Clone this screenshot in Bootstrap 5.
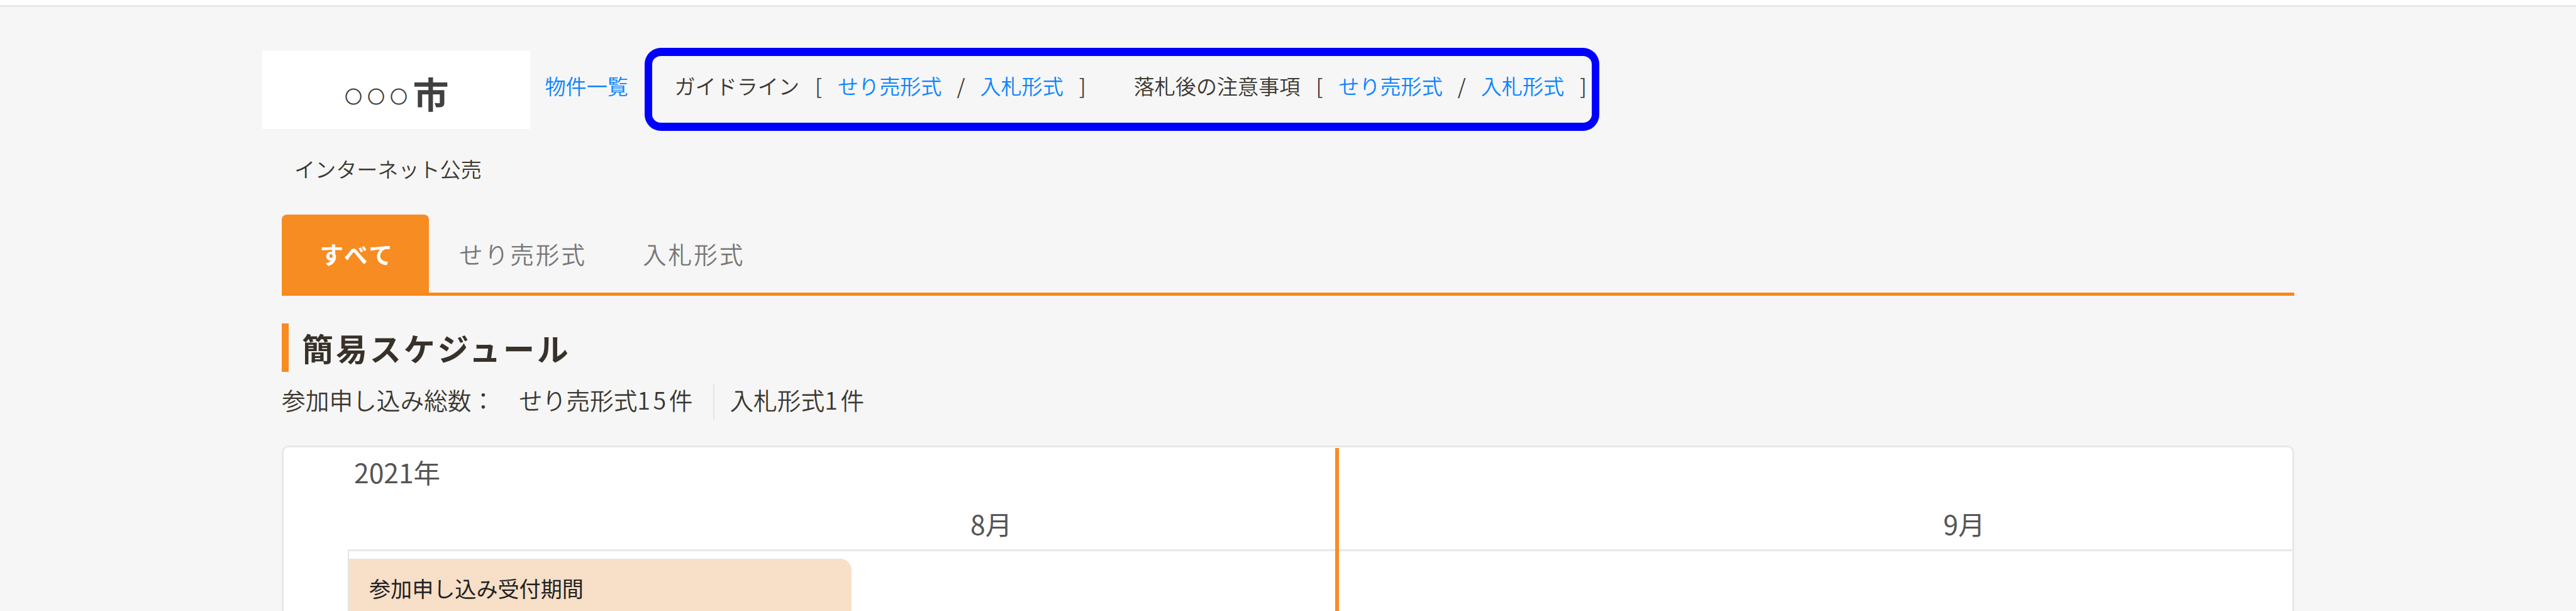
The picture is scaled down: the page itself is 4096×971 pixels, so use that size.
<!DOCTYPE html>
<html lang="ja">
  <head>
    <meta charset="UTF-8" />
    <meta name="viewport" content="width=device-width, initial-scale=1.0" />
    <title>インターネット公売</title>
    <link
      href="https://cdn.jsdelivr.net/npm/bootstrap@5.3.2/dist/css/bootstrap.min.css"
      rel="stylesheet"
    />
    <style>
      body {
        height: 971px;
        background: #f6f6f6;
        color: #3b372f;
        font-family: "Noto Sans CJK JP", sans-serif;
        font-size: 33.1px;
        font-weight: 350;
        line-height: 48px;
      }
      a {
        color: #0a84ff;
      }
      .top-strip {
        height: 11px;
        border-bottom: 3px solid #e8e8e8;
      }
      .site-header {
        height: 330px;
        padding: 65px 0 0 417px;
      }
      .logo-box {
        width: 426px;
        height: 124px;
        margin-top: 5px;
        padding: 9px 0 0 2px;
        color: #404040;
        font-size: 57px;
        line-height: 1;
      }
      .logo-box .circles {
        padding-top: 10px;
        font-size: 27px;
        letter-spacing: 9px;
        -webkit-text-stroke: 1px #404040;
      }
      .list-link {
        width: 158px;
        margin: 36px 0 0 23.5px;
      }
      .guide-nav {
        width: 1518px;
        height: 132px;
        padding: 23px 0 0 36px;
        border: 13px solid #0000ff;
        border-width: 13px 12.5px;
        border-radius: 26px;
      }
      .guide-nav > * {
        flex: none;
      }
      .sep {
        width: 61px;
        text-align: center;
      }
      .guide-gap {
        width: 51px;
      }
      .site-name {
        margin: 36px 0 0 51px;
      }
      .page-main {
        width: 3200px;
        margin-left: 448px;
      }
      .format-tabs {
        height: 129px;
        border-bottom: 5px solid #fa8818;
      }
      .format-tabs .nav-link {
        height: 124px;
        padding: 0;
        border: 0;
        border-radius: 8px 8px 0 0;
        color: #777;
        font-size: 37.7px;
        letter-spacing: 2.9px;
        line-height: 124px;
      }
      .format-tabs .nav-link.active {
        width: 234px;
        padding-left: 6px;
        background: #f78c23;
        color: #fff;
        font-weight: 700;
        letter-spacing: 3.4px;
        text-align: center;
      }
      .format-tabs .bid-tab {
        margin-left: 89px;
      }
      .section-title {
        height: 77px;
        margin: 44px 0 0;
        padding-left: 21px;
        border-left: 11px solid #fa8b22;
        color: #37312a;
        font-size: 50px;
        font-weight: 700;
        letter-spacing: 3.9px;
        line-height: 77px;
      }
      .entry-total {
        height: 57px;
        margin: 19px 0 41px;
        font-size: 37.7px;
        line-height: 50px;
      }
      .entry-total .num {
        letter-spacing: 4.5px;
      }
      .entry-total .bid-total {
        margin-left: 33px;
        padding-left: 24px;
        border-left: 2px solid #e4e4e4;
      }
      .schedule {
        height: 263px;
        border: 3px solid #e8e8e8;
        border-bottom: 0;
        border-radius: 10px 10px 0 0;
        background: #fff;
        color: #555;
        font-size: 42.6px;
        font-weight: 400;
        line-height: 62px;
      }
      .year {
        height: 82px;
        padding: 8px 0 0 112px;
      }
      .months {
        height: 80px;
        padding: 8px 0 0 1092px;
      }
      .months div {
        width: 1547px;
      }
      .months div + div {
        width: auto;
      }
      .chart {
        height: 98px;
        margin-left: 102px;
        padding-top: 12px;
        border-top: 3px solid #e8e8e8;
        border-left: 2px solid #e4e4e4;
      }
      .period {
        width: 799px;
        height: 83px;
        padding-left: 32px;
        border-radius: 0 18px 0 0;
        background: #f7dfc8;
        color: #222;
        font-size: 34.1px;
        line-height: 93px;
      }
      /* 現在日のライン */
      .today-line {
        top: 1px;
        bottom: 0;
        left: 1672px;
        width: 6px;
        background: #fa8b22;
      }
    </style>
  </head>
  <body class="overflow-hidden text-nowrap">
    <div class="top-strip bg-white"></div>

    <header class="site-header">
      <div class="d-flex align-items-start">
        <div
          class="logo-box bg-white d-flex justify-content-center align-items-center"
        >
          <span class="circles">○○○</span><span class="fw-bold">市</span>
        </div>
        <a href="#" class="list-link text-decoration-none">物件一覧</a>
        <nav class="guide-nav d-flex align-items-start">
          <span>ガイドライン</span>
          <span class="sep">[</span>
          <a href="#" class="text-decoration-none">せり売形式</a>
          <span class="sep">/</span>
          <a href="#" class="text-decoration-none">入札形式</a>
          <span class="sep">]</span>
          <span class="guide-gap"></span>
          <span>落札後の注意事項</span>
          <span class="sep">[</span>
          <a href="#" class="text-decoration-none">せり売形式</a>
          <span class="sep">/</span>
          <a href="#" class="text-decoration-none">入札形式</a>
          <span class="sep">]</span>
        </nav>
      </div>
      <div class="site-name">インターネット公売</div>
    </header>

    <main class="page-main">
      <ul class="nav nav-tabs format-tabs flex-nowrap">
        <li class="nav-item"><a href="#" class="nav-link active">すべて</a></li>
        <li class="nav-item ms-5"><a href="#" class="nav-link">せり売形式</a></li>
        <li class="nav-item bid-tab"><a href="#" class="nav-link">入札形式</a></li>
      </ul>

      <h2 class="section-title">簡易スケジュール</h2>
      <div class="entry-total d-flex">
        <div>参加申し込み総数：　せり売形式<span class="num">15</span>件</div>
        <div class="bid-total">入札形式<span class="num">1</span>件</div>
      </div>

      <div class="schedule position-relative">
        <div class="year">2021年</div>
        <div class="months d-flex">
          <div>8月</div>
          <div>9月</div>
        </div>
        <div class="chart">
          <div class="period">参加申し込み受付期間</div>
        </div>
        <div class="today-line position-absolute"></div>
      </div>
    </main>

    <script src="https://cdn.jsdelivr.net/npm/bootstrap@5.3.2/dist/js/bootstrap.bundle.min.js"></script>
  </body>
</html>
